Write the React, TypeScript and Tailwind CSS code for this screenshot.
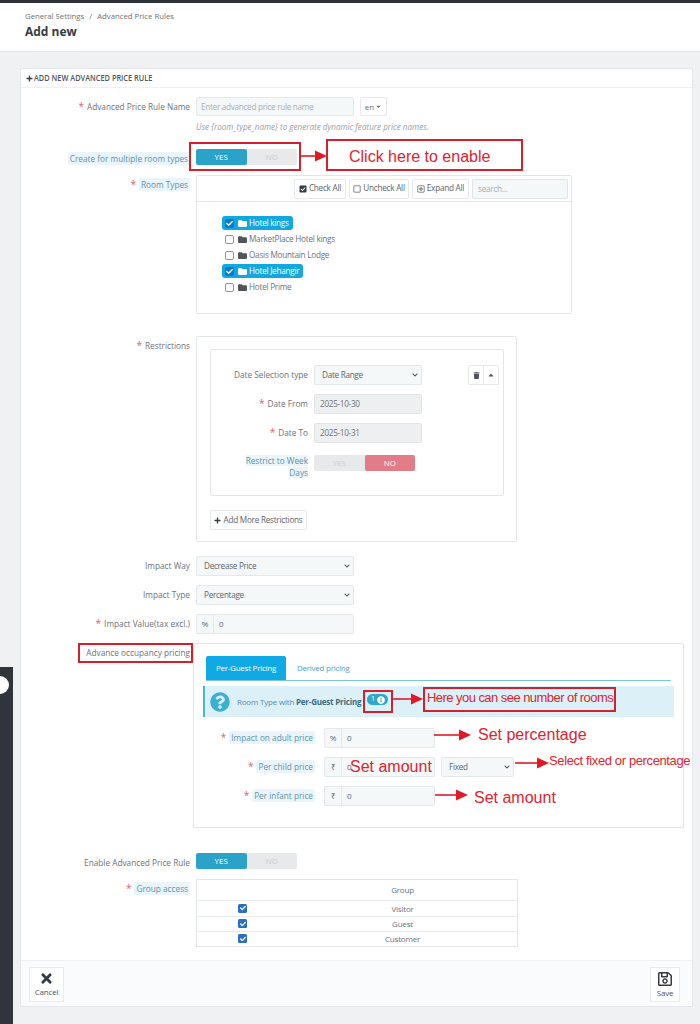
import React from "react";
import { FaPlus, FaCheckSquare, FaRegSquare, FaRegPlusSquare, FaFolder, FaTrash, FaCaretUp, FaCaretDown, FaQuestionCircle, FaTimes, FaRegSave, FaInfoCircle, FaCheck, FaChevronDown } from "react-icons/fa";

const Star = () => <span className="text-[#e0606c] mr-[3px] text-[10px]">*</span>;

function Label({ text, star, hint, className = "" }: { text: string; star?: boolean; hint?: boolean; className?: string }) {
  return (
    <div className={`shrink-0 text-right leading-[19px] ${className}`}>
      {star && <Star />}
      <span className={hint ? "bg-[#e9f5fa] text-[#5f93a8] px-[2px] py-[1px] rounded-[2px]" : "text-[#6c7378]"}>{text}</span>
    </div>
  );
}

function Row({ label, star, hint, mt, children }: { label: string; star?: boolean; hint?: boolean; mt: string; children: React.ReactNode }) {
  return (
    <div className={`flex gap-[6px] ${mt}`}>
      <Label text={label} star={star} hint={hint} className="w-[169px]" />
      {children}
    </div>
  );
}

function Toggle({ active }: { active: "yes" | "no" }) {
  return (
    <div className="flex h-[16px] w-[101px] rounded-[2px] bg-[#e7e9ea] text-[#c9cdd0] text-[8px] leading-[16px] text-center">
      <div className={`flex-1 rounded-[2px] ${active === "yes" ? "bg-[#2ba3c9] text-white" : ""}`}>YES</div>
      <div className={`flex-1 rounded-[2px] ${active === "no" ? "bg-[#e27c88] text-white" : ""}`}>NO</div>
    </div>
  );
}

function Btn({ w, children }: { w: string; children: React.ReactNode }) {
  return (
    <div className={`${w} h-[20px] flex items-center justify-center gap-[2px] whitespace-nowrap bg-white border border-[#e6e8ea] rounded-[2px] text-[#5e6468] text-[8.2px] tracking-[-0.25px]`}>
      {children}
    </div>
  );
}

function Sel({ w, value, options }: { w: string; value: string; options: string[] }) {
  return (
    <div className={`relative ${w} h-[20px] shrink-0`}>
      <select defaultValue={value} className="appearance-none w-full h-full bg-[#f4f8f9] border border-[#e3e8ea] rounded-[2px] text-[#5e6468] text-[8.2px] tracking-[-0.3px] pl-[7px]">
        {options.map((o) => <option key={o}>{o}</option>)}
      </select>
      <FaChevronDown size={6} className="absolute right-[4px] top-[7px] text-[#50555a]" />
    </div>
  );
}

function DateField({ value }: { value: string }) {
  return <div className="w-[108px] h-[20px] bg-[#eeeff0] border border-[#e2e4e6] rounded-[2px] text-[#6c7378] text-[8.2px] tracking-[-0.3px] leading-[18px] pl-[5px]">{value}</div>;
}

function Tree({ name, on }: { name: string; on?: boolean }) {
  return (
    <div className="h-[16px] flex items-center">
      <div className={`h-[14px] flex items-center pl-[3px] pr-[4px] rounded-[3px] ${on ? "bg-[#12a7df] text-white" : "text-[#6c7378]"}`}>
        {on ? (
          <span className="w-[9px] h-[9px] bg-[#0b78d0] rounded-[2px] flex items-center justify-center text-white"><FaCheck size={7} /></span>
        ) : (
          <span className="w-[9px] h-[9px] bg-white border border-[#8d9296] rounded-[2px]" />
        )}
        <FaFolder size={9} className={`ml-[4px] mr-[2px] ${on ? "text-white" : "text-[#50555a]"}`} />
        <span>{name}</span>
      </div>
    </div>
  );
}

function PriceInput({ unit, value, w = "w-[111px]" }: { unit: string; value: string; w?: string }) {
  return (
    <div className={`${w} h-[20px] flex bg-[#f4f8f9] border border-[#e3e8ea] rounded-[2px] text-[#5e6468] text-[8px] leading-[18px]`}>
      <div className="w-[17px] text-center border-r border-[#e3e8ea] shrink-0">{unit}</div>
      <div className="pl-[5px]">{value}</div>
    </div>
  );
}

function GroupRow({ name, h }: { name: string; h: string }) {
  return (
    <div className={`flex ${h} border-t border-[#e9ecee]`}>
      <div className="w-[91px] flex items-center justify-center pb-[1px]">
        <span className="w-[9px] h-[9px] bg-[#2a6fc0] rounded-[1.5px] flex items-center justify-center text-white"><FaCheck size={6} /></span>
      </div>
      <div className="flex-1 flex items-center justify-center text-[#6c7378] text-[8px] tracking-[-0.2px]">{name}</div>
    </div>
  );
}

const RED = "#df1a26";
const Box = ({ cls }: { cls: string }) => <div className={`absolute border-2 border-[#d3202c] ${cls}`} />;

function Arrow({ x1, x2, y }: { x1: number; x2: number; y: number }) {
  return (
    <g>
      <line x1={x1} x2={x2 - 10} y1={y} y2={y} stroke={RED} strokeWidth={1.6} />
      <polygon points={`${x2 - 12},${y - 5.5} ${x2},${y} ${x2 - 12},${y + 5.5}`} fill={RED} />
    </g>
  );
}

const Note = ({ cls, children }: { cls: string; children: React.ReactNode }) => (
  <div className={`absolute text-[#dc2430] whitespace-nowrap font-['Liberation_Sans',Arial,sans-serif] ${cls}`}>{children}</div>
);

export default function App() {
  return (
    <div className="relative w-[700px] h-[1024px] overflow-hidden bg-[#eff1f2] font-['Open_Sans',sans-serif] text-[8.25px] text-[#6c7378]">
      <div className="h-[3px] bg-[#2d3338]" />
      <div className="h-[49px] bg-white border-b border-[#e4e7e9] pl-[25px]">
        <div className="pt-[7px] text-[7.75px] leading-[12px] text-[#6c7378]">General Settings <span className="mx-[3px]">/</span> Advanced Price Rules</div>
        <div className="mt-[2px] text-[12px] leading-[16px] font-bold text-[#363a41]">Add new</div>
      </div>

      <div className="ml-[20px] mt-[16px] w-[673px] h-[939px] bg-white border border-[#e4e7e9] rounded-[2px] flex flex-col">
        <div className="h-[19px] border-b border-[#eef0f1] pl-[5px] flex items-center gap-[1px] text-[9.5px] text-[#50565a] font-semibold whitespace-nowrap">
          <FaPlus size={7} className="text-[#363a41] shrink-0" />
          <span className="inline-block origin-left scale-x-[0.775]">ADD NEW ADVANCED PRICE RULE</span>
        </div>

        <Row label="Advanced Price Rule Name" star mt="mt-[9px]">
          <div>
            <div className="flex gap-[6px]">
              <div className="w-[158px] h-[19px] bg-[#f4f8f9] border border-[#e3e8ea] rounded-[2px] text-[#a9afb3] text-[8.2px] tracking-[-0.3px] leading-[17px] pl-[4px]">Enter advanced price rule name</div>
              <div className="w-[27px] h-[19px] bg-white border border-[#e6e8ea] rounded-[2px] flex items-center justify-center gap-[1px] text-[8px]">en<FaCaretDown size={7} /></div>
            </div>
            <div className="mt-[5px] h-[12px] leading-[12px] italic text-[8.1px] text-[#9aa0a4]">Use {"{room_type_name}"} to generate dynamic feature price names.</div>
          </div>
        </Row>

        <Row label="Create for multiple room types" hint mt="mt-[16px]"><Toggle active="yes" /></Row>

        <Row label="Room Types" star hint mt="mt-[7px]">
          <div className="w-[376px] h-[139px] border border-[#e3e6e8] rounded-[2px]">
            <div className="h-[26px] border-b border-[#e3e6e8] flex items-center justify-end gap-[3px] pr-[3px]">
              <Btn w="w-[52px]"><FaCheckSquare size={8} className="text-[#363a41]" />Check All</Btn>
              <Btn w="w-[60px]"><FaRegSquare size={8} />Uncheck All</Btn>
              <Btn w="w-[57px]"><FaRegPlusSquare size={8} />Expand All</Btn>
              <div className="w-[96px] h-[20px] bg-[#f4f8f9] border border-[#dfe4e6] rounded-[2px] text-[#a9afb3] text-[8.2px] tracking-[-0.25px] leading-[18px] pl-[5px]">search...</div>
            </div>
            <div className="pt-[13px] pl-[25px] text-[8.2px] tracking-[-0.25px]">
              <Tree name="Hotel kings" on />
              <Tree name="MarketPlace Hotel kings" />
              <Tree name="Oasis Mountain Lodge" />
              <Tree name="Hotel Jehangir" on />
              <Tree name="Hotel Prime" />
            </div>
          </div>
        </Row>

        <Row label="Restrictions" star mt="mt-[22px]">
          <div className="w-[321px] h-[206px] border border-[#e3e6e8] rounded-[2px] pt-[12px] pl-[13px]">
            <div className="w-[294px] h-[147px] border border-[#e3e6e8] rounded-[2px] pt-[15px]">
              <div className="flex gap-[6px] items-start">
                <Label text="Date Selection type" className="w-[97px]" />
                <Sel w="w-[108px]" value="Date Range" options={["Date Range"]} />
                <div className="ml-[40px] w-[31px] h-[20px] flex border border-[#e6e8ea] rounded-[2px] text-[#50555a]">
                  <div className="flex-1 flex items-center justify-center border-r border-[#e6e8ea]"><FaTrash size={7} /></div>
                  <div className="flex-1 flex items-center justify-center"><FaCaretUp size={8} /></div>
                </div>
              </div>
              <div className="flex gap-[6px] mt-[9px]"><Label text="Date From" star className="w-[97px]" /><DateField value="2025-10-30" /></div>
              <div className="flex gap-[6px] mt-[9px]"><Label text="Date To" star className="w-[97px]" /><DateField value="2025-10-31" /></div>
              <div className="flex gap-[6px] mt-[12px]">
                <div className="w-[97px] pl-[30px] text-right leading-[12px]"><span className="bg-[#e9f5fa] text-[#5f93a8] font-medium">Restrict to Week Days</span></div>
                <Toggle active="no" />
              </div>
            </div>
            <div className="mt-[14px]"><Btn w="w-[97px]"><FaPlus size={7} className="text-[#363a41]" />Add More Restrictions</Btn></div>
          </div>
        </Row>

        <Row label="Impact Way" mt="mt-[14px]"><Sel w="w-[158px]" value="Decrease Price" options={["Decrease Price"]} /></Row>
        <Row label="Impact Type" mt="mt-[9px]"><Sel w="w-[158px]" value="Percentage" options={["Percentage"]} /></Row>
        <Row label="Impact Value(tax excl.)" star mt="mt-[9px]"><PriceInput unit="%" value="0" w="w-[158px]" /></Row>

        <Row label="Advance occupancy pricing" mt="mt-[9px]">
          <div className="-ml-[3px] w-[491px] h-[185px] border border-[#e3e6e8] rounded-[2px] pt-[12px] pl-[12px]">
            <div className="w-[465px] h-[25px] flex border-b border-[#7fc7d0] text-[8px] tracking-[-0.25px]">
              <div className="w-[80px] h-[24px] bg-[#0fa9e6] text-white rounded-t-[2px] flex items-center justify-center">Per-Guest Pricing</div>
              <div className="ml-[11px] leading-[24px] text-[#4ba5c4]">Derived pricing</div>
            </div>
            <div className="-ml-[3px] mt-[5px] w-[471px] h-[31px] bg-[#dcf0f8] border-l-2 border-[#4ab5c4] flex items-center pl-[5px] text-[8px] tracking-[-0.2px] text-[#5f8a9c]">
              <FaQuestionCircle size={20} className="text-[#3ab1d2] mr-[7px]" />
              <span>Room Type with <b className="text-[#3a6c80] font-bold">Per-Guest Pricing</b></span>
              <span className="ml-[6px] -mt-[4px] w-[21px] h-[11px] rounded-full bg-[#2fa8c9] text-white text-[7px] flex items-center justify-center gap-[2px]">1<FaInfoCircle size={8} /></span>
            </div>
            <div className="flex gap-[9px] mt-[11px]">
              <Label text="Impact on adult price" star hint className="w-[109px]" />
              <PriceInput unit="%" value="0" />
            </div>
            <div className="flex gap-[9px] mt-[9px]">
              <Label text="Per child price" star hint className="w-[109px]" />
              <PriceInput unit="₹" value="0" />
              <div className="-ml-[3px]"><Sel w="w-[73px]" value="Fixed" options={["Fixed", "Percentage"]} /></div>
            </div>
            <div className="flex gap-[9px] mt-[9px]">
              <Label text="Per infant price" star hint className="w-[109px]" />
              <PriceInput unit="₹" value="0" />
            </div>
          </div>
        </Row>

        <Row label="Enable Advanced Price Rule" mt="mt-[25px]"><Toggle active="yes" /></Row>

        <Row label="Group access" star hint mt="mt-[7px]">
          <div className="w-[322px] h-[68px] border border-[#e3e6e8] flex flex-col">
            <div className="flex h-[20px]">
              <div className="w-[91px]" />
              <div className="flex-1 flex items-center justify-center text-[8px] tracking-[-0.2px]">Group</div>
            </div>
            <GroupRow name="Visitor" h="h-[16px]" />
            <GroupRow name="Guest" h="h-[15px]" />
            <GroupRow name="Customer" h="h-[15px]" />
          </div>
        </Row>

        <div className="mt-[13px] flex-1 bg-[#fafbfc] border-t border-[#f0f2f3] flex justify-between pl-[8px] pr-[12px] pt-[6px]">
          <div className="w-[35px] h-[35px] bg-white border border-[#e9ebec] flex flex-col items-center justify-center text-[8px] tracking-[-0.2px] text-[#50565a]">
            <FaTimes size={15} className="text-[#363a41]" />Cancel
          </div>
          <div className="w-[30px] h-[35px] bg-white border border-[#e9ebec] flex flex-col items-center justify-center text-[8px] tracking-[-0.2px] text-[#50565a]">
            <FaRegSave size={16} className="text-[#363a41]" />Save
          </div>
        </div>
      </div>

      {/* collapsed sidebar peeking in under the page */}
      <div className="absolute left-0 top-[667px] bottom-0 w-[13px] bg-[#2f353a]">
        <div className="absolute -left-[9px] top-[9px] w-[18px] h-[18px] rounded-full bg-white" />
      </div>

      {/* hand-drawn annotations */}
      <Box cls="left-[189px] top-[142px] w-[112px] h-[29px]" />
      <Box cls="left-[326px] top-[139px] w-[197px] h-[32px]" />
      <Box cls="left-[78px] top-[643px] w-[115px] h-[20px]" />
      <Box cls="left-[363px] top-[690px] w-[30px] h-[23px]" />
      <Box cls="left-[423px] top-[687px] w-[193px] h-[25px]" />
      <svg className="absolute left-0 top-0 pointer-events-none" width="700" height="1024">
        <Arrow x1={301} x2={327} y={156} />
        <Arrow x1={393} x2={423} y={699} />
        <Arrow x1={434} x2={471} y={735} />
        <Arrow x1={515} x2={549} y={763} />
        <Arrow x1={435} x2={468} y={795} />
      </svg>
      <Note cls="left-[349px] top-[148px] text-[16px] leading-[18px]">Click here to enable</Note>
      <Note cls="left-[427px] top-[690px] text-[13px] tracking-[-0.55px] leading-[16px]">Here you can see number of rooms</Note>
      <Note cls="left-[478px] top-[726px] text-[16px] leading-[18px]">Set percentage</Note>
      <Note cls="left-[350px] top-[758px] text-[16px] leading-[18px]">Set amount</Note>
      <Note cls="left-[549px] top-[753px] text-[13px] tracking-[-0.38px] leading-[16px]">Select fixed or percentage</Note>
      <Note cls="left-[474px] top-[789px] text-[16px] leading-[18px]">Set amount</Note>
    </div>
  );
}
